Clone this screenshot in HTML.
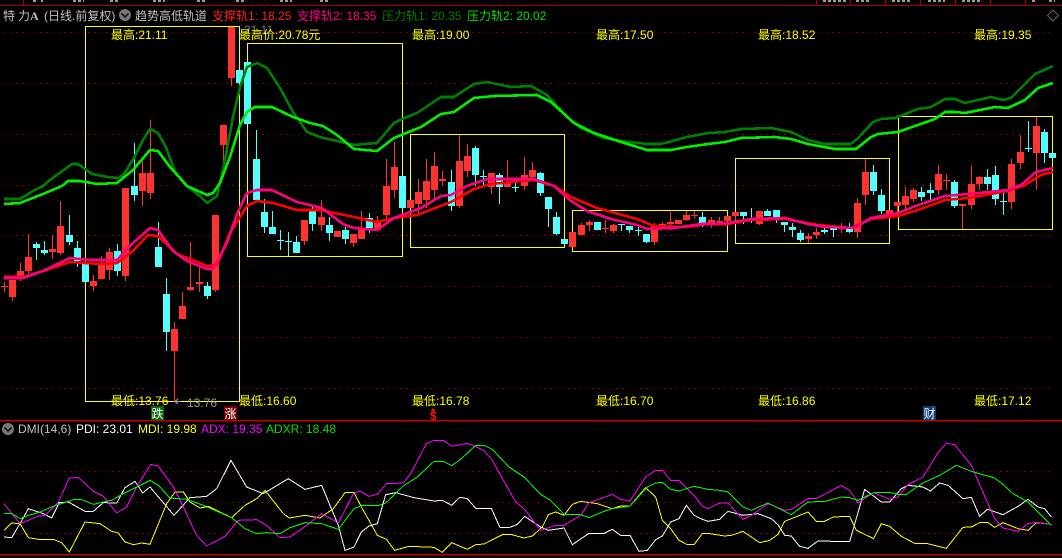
<!DOCTYPE html>
<html lang="zh">
<head>
<meta charset="utf-8">
<title>K线图</title>
<style>
html,body{margin:0;padding:0;background:#000;width:1062px;height:558px;overflow:hidden}
svg{display:block}
text{font-family:"Liberation Sans","WenQuanYi Zen Hei","Noto Sans CJK SC",sans-serif;font-size:12px}
.y{fill:#ffff00}
.g{fill:#c0c0c0}
polyline,.l{fill:none}
</style>
</head>
<body>
<svg width="1062" height="558" viewBox="0 0 1062 558" xmlns="http://www.w3.org/2000/svg">
<rect width="1062" height="558" fill="#000"/>

<!-- top strip -->
<g shape-rendering="crispEdges">
<path d="M0 5.5H1062" stroke="#b00000" stroke-width="1.4"/>
<path d="M23.5 0V5M816.5 0V5M850.5 0V5M885.5 0V5M920.5 0V5M955.5 0V5M990.5 0V5M1025.5 0V5" stroke="#b00000"/>
<path d="M33 1H36M41 1H43M73 1H84M110 1H118M153 1H165M197 1H205M236 1H244M280 1H292M320 1H330M823 1H846M856 1H871M892 1H910M928 1H945M962 1H980M1032 1H1036M1049 1H1055" stroke="#9a9a9a" stroke-width="2" stroke-dasharray="3 2"/>

<!-- dotted grid -->
<path d="M4 32.5H1054M4 83.5H1054M4 134.5H1054M4 185.5H1054M4 235.5H1054M4 286.5H1054M4 337.5H1054M4 388.5H1054M4 471.5H1054M4 502.5H1054M4 533.5H1054" stroke="#7a0000" stroke-dasharray="2 4"/>

<!-- solid separators -->
<path d="M0 420.5H1062M0 554.5H1062" stroke="#c00000" stroke-width="1.5"/>

<!-- yellow boxes -->
<g fill="none" stroke="#ffff00">
<rect x="85.5" y="26.5" width="154" height="375"/>
<rect x="247.5" y="43.5" width="155" height="213"/>
<rect x="410.5" y="134.5" width="154" height="113"/>
<rect x="572.5" y="210.5" width="155" height="41"/>
<rect x="735.5" y="158.5" width="154" height="85"/>
<rect x="898.5" y="116.5" width="154" height="113"/>
</g>

<!-- red candles wicks -->
<path fill="none" stroke="#ff3232" d="M4.5 282V292M12.5 280V301M20.5 263V281M28.5 234V276M52.5 235V259M60.5 201V255M93.5 275V291M101.5 256V279M109.5 248V280M125.5 188V281M142.5 161V206M150.5 120V199M174.5 322V402M182.5 292V319M190.5 242V291M199.5 266V292M215.5 215V292M223.5 125V170M231.5 27V86M304.5 220V245M321.5 200V231M353.5 234V247M361.5 211V239M377.5 216V230M386.5 159V218M394.5 142V198M418.5 179V214M426.5 159V208M434.5 152V198M442.5 171V186M459.5 135V208M467.5 144V177M491.5 173V194M507.5 160V187M524.5 157V190M532.5 162V180M581.5 223V235M589.5 220V231M605.5 220V233M613.5 224V233M654.5 223V245M662.5 222V226M670.5 212V230M686.5 211V221M694.5 211V219M711.5 217V228M719.5 217V222M735.5 212V220M759.5 211V225M808.5 233V243M816.5 228V239M841.5 223V233M857.5 198V238M865.5 159V205M897.5 202V216M905.5 187V209M913.5 188V202M938.5 165V195M946.5 174V190M962.5 204V229M971.5 166V209M979.5 176V190M1011.5 159V209M1020.5 135V169M1036.5 117V190"/>
<!-- red candle bodies -->
<path fill="none" stroke="#ff3232" stroke-width="7" d="M4.5 286V287M12.5 280V297M20.5 271V279M28.5 257V271M52.5 249V252M60.5 226V253M93.5 281V286M101.5 265V279M109.5 252V270M125.5 188V276M142.5 173V191M150.5 173V193M174.5 329V351M182.5 306V319M190.5 287V290M199.5 282V284M215.5 215V290M223.5 125V145M231.5 27V78M304.5 220V241M321.5 217V225M337.5 231V237M353.5 234V243M361.5 229V239M377.5 221V230M386.5 186V215M394.5 167V190M410.5 200V208M418.5 192V204M426.5 181V200M434.5 166V190M442.5 179V181M459.5 161V206M467.5 156V171M491.5 173V187M507.5 183V187M524.5 175V186M532.5 170V177M572.5 232V247M581.5 225V235M589.5 222V225M605.5 228V229M613.5 225V231M654.5 226V242M662.5 224V226M670.5 222V224M678.5 220V224M686.5 215V220M694.5 215V216M711.5 220V223M719.5 221V222M727.5 216V221M735.5 212V216M759.5 211V224M808.5 236V239M816.5 232V235M841.5 227V229M857.5 203V232M865.5 172V195M889.5 210V216M897.5 202V206M905.5 196V205M913.5 190V199M938.5 174V190M946.5 180V181M962.5 204V206M971.5 184V205M979.5 177V184M1011.5 164V202M1020.5 152V163M1036.5 126V153"/>
<!-- cyan candles wicks -->
<path fill="none" stroke="#54ffff" d="M36.5 242V260M44.5 241V255M69.5 215V245M77.5 241V267M85.5 258V282M117.5 244V276M134.5 143V201M158.5 222V267M166.5 278V351M207.5 282V299M256.5 130V200M264.5 199V233M272.5 211V234M280.5 230V250M288.5 232V256M296.5 236V253M312.5 205V231M329.5 217V241M345.5 227V244M369.5 213V233M451.5 170V211M475.5 146V186M483.5 170V186M499.5 173V204M515.5 179V192M540.5 172V196M548.5 197V227M556.5 212V235M621.5 224V231M629.5 226V233M638.5 227V236M646.5 234V243M702.5 212V227M743.5 212V224M751.5 208V223M767.5 209V216M776.5 210V223M784.5 222V232M792.5 223V237M800.5 230V242M824.5 228V234M833.5 228V237M849.5 223V233M873.5 165V195M881.5 189V214M921.5 187V201M930.5 183V200M954.5 180V208M987.5 169V190M995.5 166V205M1003.5 189V215M1028.5 121V152M1044.5 129V163"/>
<!-- cyan candle bodies -->
<path fill="none" stroke="#54ffff" stroke-width="7" d="M36.5 244V248M44.5 250V253M69.5 235V242M77.5 248V261M85.5 263V282M117.5 251V271M134.5 186V195M158.5 247V267M166.5 294V332M207.5 286V296M239.5 70V83M247.5 62V124M256.5 159V200M264.5 212V227M272.5 227V234M280.5 240V241M288.5 241V242M296.5 242V253M312.5 211V224M329.5 225V233M345.5 230V239M369.5 218V228M402.5 176V208M451.5 182V206M475.5 148V175M483.5 176V177M499.5 175V187M515.5 187V188M540.5 173V193M548.5 197V209M556.5 217V234M564.5 239V244M597.5 222V230M621.5 224V225M629.5 226V230M638.5 230V231M646.5 234V242M702.5 217V223M743.5 212V216M751.5 218V219M767.5 211V216M776.5 210V218M784.5 222V225M792.5 227V230M800.5 233V240M824.5 230V232M833.5 228V230M849.5 229V232M873.5 172V191M881.5 195V211M921.5 192V197M930.5 190V193M954.5 182V206M987.5 177V184M995.5 175V199M1003.5 201V202M1028.5 148V149M1044.5 132V153M1052.5 153V158"/>

<!-- channel lines -->
<polyline stroke="#008000" stroke-width="2.6" points="4,199 20,199 33,191 43,186 50,180 72,164 78,164 92,174 108,177 118,178 124,174 134,158 143,140 150,129 158,133 166,147 175,172 187,186 200,196 207,203 217,196 223,170 233,117 240,87 247,67 257,63 267,68 280,88 293,112 307,132 320,137 333,140 354,145 377,143 394,123 402,119 417,113 441,97 454,97 474,84 487,82 511,87 531,86 547,95 567,117 581,128 604,138 621,141 647,144 661,144 687,137 708,133 725,132 741,129 771,128 791,132 808,140 825,144 851,144 858,138 873,122 881,119 895,118 918,109 931,107 945,99 955,99 965,103 991,97 1003,100 1011,98 1035,74 1053,66"/>
<polyline stroke="#00f000" stroke-width="2.6" points="4,204 20,203 43,194 62,186 68,181 80,181 97,184 117,183 133,170 150,150 158,151 170,167 187,186 207,195 213,193 220,183 230,157 240,125 247,112 255,107 272,107 293,117 310,123 323,126 337,135 354,149 377,151 394,138 421,127 441,114 454,112 474,98 494,96 537,95 551,102 574,123 594,133 621,142 647,150 671,150 687,147 708,144 725,142 741,138 775,137 791,139 808,144 835,149 856,149 871,137 878,134 898,132 935,119 945,112 955,112 965,113 995,107 1008,108 1025,100 1038,88 1053,83"/>
<polyline stroke="#ff0000" stroke-width="2.6" points="4,277 23,277 43,271 70,262 100,264 117,263 133,251 148,235 158,236 177,254 200,263 207,266 217,265 230,233 247,206 257,201 273,203 297,210 320,210 354,217 377,222 394,218 417,215 451,202 474,189 491,184 534,180 554,186 571,197 597,208 637,219 654,226 687,227 708,224 728,224 751,220 785,219 818,225 851,228 871,219 898,216 921,209 945,200 968,198 1008,191 1025,185 1041,175 1053,172"/>
<polyline stroke="#ff0080" stroke-width="2.6" points="4,278 23,278 43,271 70,258 90,260 117,260 133,243 150,228 158,230 173,251 187,261 207,269 213,269 227,243 237,214 247,193 257,190 272,190 297,202 322,208 343,224 354,228 377,230 394,218 421,208 441,196 451,195 467,186 487,179 534,179 554,186 571,201 587,211 611,219 637,225 647,229 674,228 701,224 708,224 728,223 751,219 785,218 808,224 825,227 855,228 871,218 898,213 921,204 945,196 968,194 1008,190 1021,185 1036,172 1053,168"/>

<!-- DMI lines, part 1 -->
<g transform="translate(0,372) scale(.33333)" stroke-width="3">
<polyline stroke="#ffffff" points="12,495 35,497 60,455 85,410 130,425 155,438 178,392 205,390 255,418 280,418 310,392 350,393 375,347 405,328 428,363 450,345 522,430 570,377 620,373 650,350 693,265 740,345 790,365 865,320 915,352 965,340 1015,460 1035,535 1062,525"/>
<polyline stroke="#ffff00" points="12,475 35,453 60,455 85,497 115,502 160,502 185,512 208,540 255,450 300,455 335,478 355,483 375,510 400,518 425,513 450,517 500,395 525,360 550,360 570,390 600,408 625,403 695,437 735,400 770,380 795,355 850,425 868,438 915,430 960,438 1000,410 1035,362 1062,362"/>
<polyline stroke="#ff00ff" points="12,395 60,455 85,445 115,432 135,430 175,390 208,318 235,316 280,358 310,373 350,423 380,405 410,345 452,277 475,282 520,345 550,405 590,490 620,522 675,493 715,445 770,443 800,460 840,497 870,495 920,460 965,425 1015,453 1062,362"/>
<polyline stroke="#00ff00" points="12,425 35,425 60,440 85,430 115,422 160,403 220,383 245,383 280,397 310,390 335,385 370,365 450,325 475,340 510,378 560,382 610,400 695,437 735,470 770,485 800,482 840,485 870,467 915,452 965,455 1015,472 1062,410"/>
</g>
<!-- DMI lines, part 2 -->
<g transform="translate(354,372) scale(.33333)" stroke-width="3">
<polyline stroke="#ffffff" points="0,525 22,480 45,462 70,455 95,368 125,362 180,377 240,387 265,385 293,400 318,376 340,380 365,409 412,409 438,467 465,467 490,457 512,433 560,465 583,475 630,468 655,518 705,484 750,484 775,472 800,490 828,490 855,538 880,535 905,503 925,492 950,450 975,440 997,400 1020,430 1045,442 1062,448"/>
<polyline stroke="#ffff00" points="0,362 25,410 45,445 70,490 97,502 122,535 165,523 240,526 265,541 293,512 340,532 365,518 390,516 445,488 470,487 510,498 535,492 565,465 583,428 605,420 630,430 655,397 680,388 730,395 775,410 800,402 828,402 875,347 905,375 925,445 950,470 975,505 1000,518 1020,518 1045,485 1062,484"/>
<polyline stroke="#ff00ff" points="0,362 20,358 45,373 70,367 97,335 148,333 170,305 217,215 240,205 268,205 293,223 340,214 390,235 415,265 440,310 485,390 510,410 560,475 605,460 630,460 680,430 705,392 775,367 800,382 828,387 875,315 905,295 925,295 950,325 975,325 1020,370 1045,403 1062,410"/>
<polyline stroke="#00ff00" points="0,410 25,400 75,400 95,393 150,340 190,315 240,268 268,268 293,281 320,262 365,220 390,220 415,232 465,285 510,315 560,367 590,385 630,427 680,428 705,437 750,418 775,410 828,402 880,345 905,333 925,331 950,352 975,357 1020,343 1062,352"/>
</g>
<!-- DMI lines, part 3 -->
<g transform="translate(708,372) scale(.33333)" stroke-width="3">
<polyline stroke="#ffffff" points="0,448 35,442 60,418 105,430 150,425 190,440 210,458 230,490 250,492 275,523 300,529 330,507 425,509 470,352 520,390 545,390 580,350 600,340 645,345 667,357 695,333 720,340 765,380 790,376 815,433 838,412 885,428 930,403 960,382 990,405 1010,410 1030,435"/>
<polyline stroke="#ffff00" points="0,484 50,492 70,490 105,478 155,512 185,505 210,487 230,448 300,420 325,448 350,448 375,435 425,433 445,475 497,500 520,455 545,463 580,493 620,514 655,514 715,529 765,466 790,465 815,452 838,451 860,466 885,452 930,470 960,475 985,452 1030,457"/>
<polyline stroke="#ff00ff" points="0,410 35,393 60,393 105,442 130,430 180,395 230,415 250,412 300,380 325,380 400,340 425,355 450,393 497,362 545,382 570,375 600,338 645,315 690,242 715,214 740,218 790,280 815,338 860,440 885,468 930,478 960,455 985,451 1030,457"/>
<polyline stroke="#00ff00" points="0,352 35,355 60,360 105,405 130,415 180,393 250,428 300,390 350,388 400,375 425,377 450,385 497,362 545,361 570,367 595,367 645,333 695,310 745,280 790,298 860,318 885,337 915,365 960,390 1030,460"/>
</g>

<!-- tag backgrounds -->
<rect x="151" y="406" width="13" height="14" fill="#006b00"/>
<rect x="224" y="406" width="13" height="14" fill="#7a0000"/>
<rect x="923" y="406" width="13" height="14" fill="#0f3f78"/>
</g>

<!-- header -->
<text x="3" y="20" class="g" font-size="12">特</text>
<text x="18" y="20" class="g">力</text>
<text x="30" y="20" class="g" style="font-family:'Liberation Serif',serif;font-weight:bold">A</text>
<text x="44" y="20" class="g">(日线.前复权)</text>
<circle cx="125" cy="15" r="6" fill="#777"/>
<path d="M121.5 13.5L125 17L128.5 13.5" fill="none" stroke="#111" stroke-width="1.6"/>
<text x="135" y="20" class="g">趋势高低轨道</text>
<text x="212" y="20" fill="#ff2020">支撑轨1: 18.25</text>
<text x="297" y="20" fill="#ff0080">支撑轨2: 18.35</text>
<text x="382" y="20" fill="#008000">压力轨1: 20.35</text>
<text x="467" y="20" fill="#00e000">压力轨2: 20.02</text>
<path d="M1053 10L1058.5 15.5L1053 21L1047.5 15.5Z" fill="none" stroke="#666"/>

<!-- high labels -->
<text x="244" y="34" fill="#777">21.11</text>
<text x="111" y="39" class="y">最高:21.11</text>
<text x="239" y="39" class="y">最高价:20.78元</text>
<text x="412" y="39" class="y">最高:19.00</text>
<text x="596" y="39" class="y">最高:17.50</text>
<text x="758" y="39" class="y">最高:18.52</text>
<text x="974" y="39" class="y">最高:19.35</text>

<!-- low labels -->
<text x="187" y="407" fill="#999">13.76</text>
<path d="M181 401.5H175M178 399L175 401.5L178 404" fill="none" stroke="#aaa"/>
<text x="111" y="405" class="y">最低:13.76</text>
<text x="239" y="405" class="y">最低:16.60</text>
<text x="412" y="405" class="y">最低:16.78</text>
<text x="596" y="405" class="y">最低:16.70</text>
<text x="758" y="405" class="y">最低:16.86</text>
<text x="974" y="405" class="y">最低:17.12</text>

<!-- tags -->
<text x="151.5" y="418" fill="#fff">跌</text>
<text x="224.5" y="418" fill="#fff">涨</text>
<text x="923.5" y="418" fill="#fff">财</text>
<text x="430" y="420" fill="#ff1010" style="font-weight:bold">$</text>
<path d="M433 408L430.5 411H435.5Z" fill="#ff1010"/>

<!-- DMI header -->
<circle cx="8" cy="429" r="6" fill="#777"/>
<path d="M4.5 427.5L8 431L11.5 427.5" fill="none" stroke="#111" stroke-width="1.6"/>
<text x="18" y="433" class="g">DMI(14,6)</text>
<text x="76" y="433" fill="#fff">PDI: 23.01</text>
<text x="138" y="433" class="y">MDI: 19.98</text>
<text x="201" y="433" fill="#ff00ff">ADX: 19.35</text>
<text x="266" y="433" fill="#00e000">ADXR: 18.48</text>
</svg>
</body>
</html>
